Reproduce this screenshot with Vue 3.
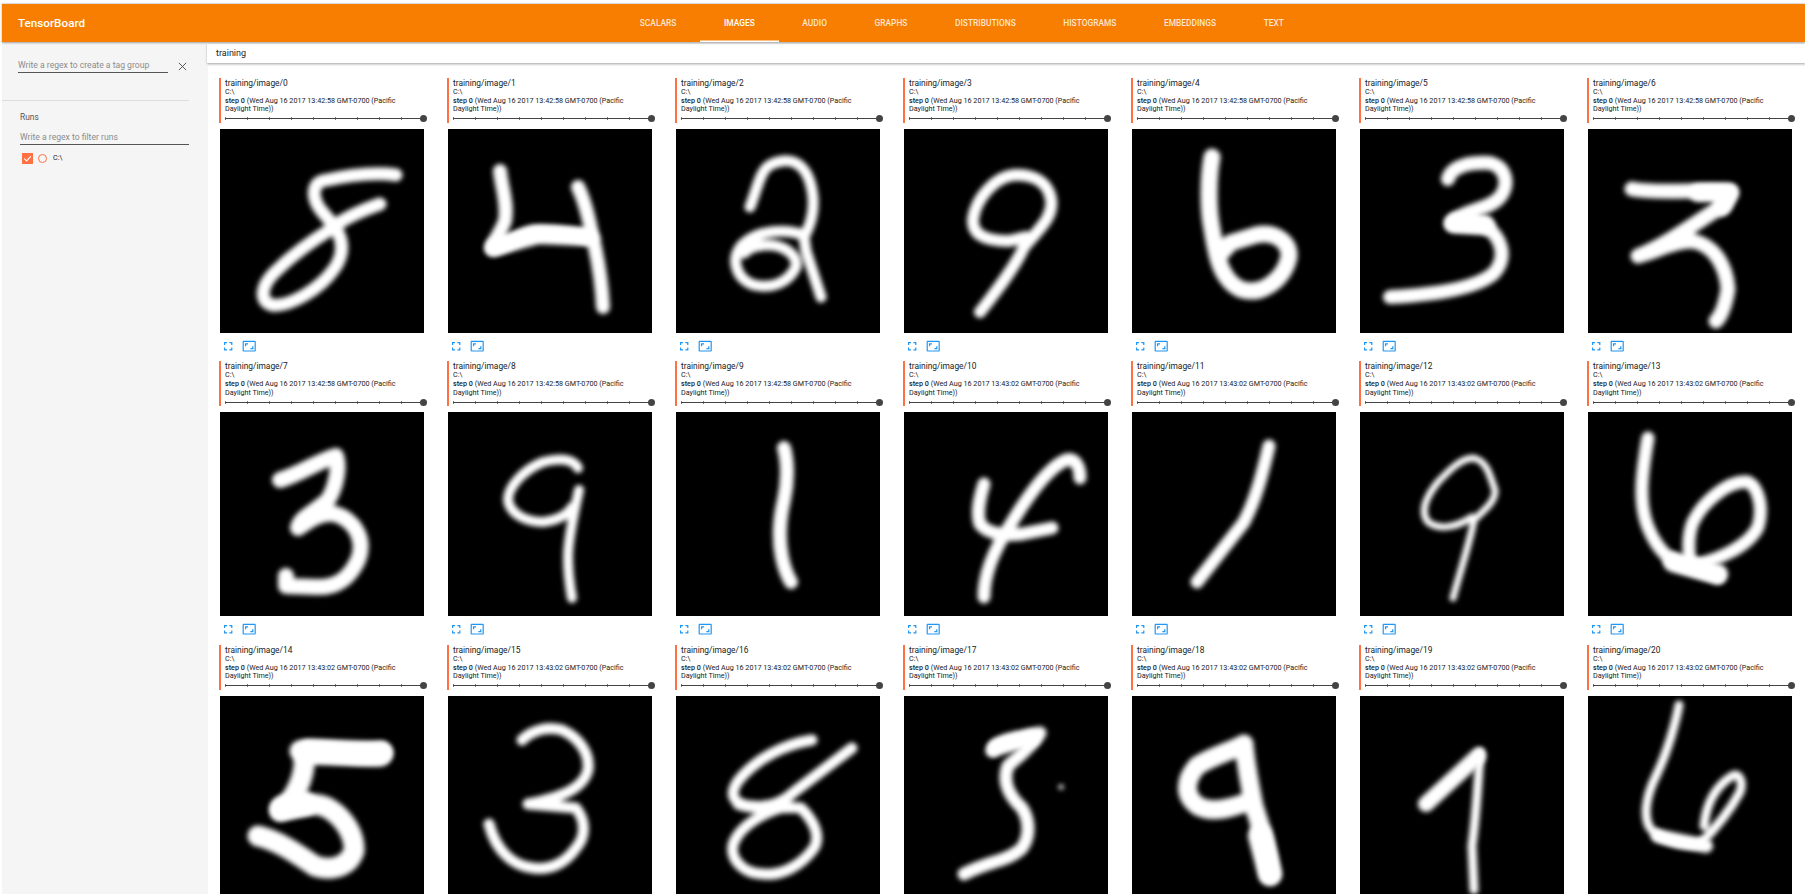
<script setup>
const tabs = ['Scalars', 'Images', 'Audio', 'Graphs', 'Distributions', 'Histograms', 'Embeddings', 'Text'];

// hand traced MNIST samples, coordinates are inside a 204x204 image
const samples = [
  [['M176 46C150 42 120 48 102 52C92 56 92 68 100 80L115 98C124 112 124 126 114 140C100 160 70 178 52 176C38 172 42 156 54 144C70 128 92 112 108 102C122 90 140 82 160 75', 13]],
  [['M52 42C54 60 60 75 57 92C52 105 45 112 44 120C60 118 68 106 85 103C105 102 125 104 146 110M130 58C136 70 140 85 144 105C150 130 154 155 155 178', 14], ['M46 118L90 106L140 108', 18]],
  [['M74 78C82 58 84 40 96 35C112 28 126 32 133 50C140 70 138 90 128 108L130 122L145 168M128 106C110 100 82 100 66 116C54 130 60 150 78 156C96 160 112 154 120 138C122 126 108 116 92 116C82 116 74 118 68 124', 11]],
  [['M76 183C90 165 110 140 120 118C135 100 150 88 147 70C144 52 128 45 110 46C90 48 72 70 69 90C68 104 78 112 105 112L122 108', 12]],
  [['M80 28C76 50 76 80 80 100C84 125 88 150 108 160C130 168 152 150 157 128C158 112 142 102 124 106L98 114C94 120 90 122 88 126', 17]],
  [['M88 50C92 36 112 33 130 34C146 38 150 55 140 68C130 80 110 80 96 90L92 95L124 96C142 108 148 128 134 144C116 160 70 166 30 168', 14], ['M94 94L125 96', 20]],
  [['M44 60C70 65 110 60 142 62L136 76C110 92 80 115 50 127C70 122 85 112 105 112C125 116 138 135 140 160C138 172 135 185 128 192', 15], ['M110 64L142 64L134 78', 18]],
  [['M60 68C80 62 100 48 116 44C120 55 116 75 108 88C95 100 80 105 78 116C90 108 100 100 115 102C135 108 146 128 138 148C130 165 118 176 96 175L66 174L66 164', 16]],
  [['M130 56C125 46 110 46 95 50C75 58 60 75 60 88C62 102 78 110 95 110C110 108 120 102 124 95M131 78C126 100 120 130 120 145C120 160 122 175 124 186', 10]],
  [['M108 36C112 50 112 70 108 88C104 105 102 125 106 145C108 155 112 165 115 170', 14]],
  [['M176 66C176 50 168 44 158 50C140 60 120 90 105 115C92 135 80 160 80 185M80 72C76 85 72 100 76 112C84 122 100 124 118 122L148 116', 13]],
  [['M137 34C132 55 125 85 112 110L65 170', 13]],
  [['M93 186C100 160 110 130 114 108C122 100 136 90 135 78C130 65 128 50 114 46C100 46 88 60 78 70C66 85 60 100 68 110C78 118 96 116 112 105', 7]],
  [['M60 26C54 60 50 90 60 115C68 135 80 150 100 155L130 165M100 155C130 148 160 135 170 115C176 95 170 75 160 70C140 68 115 90 105 110C100 122 100 135 102 150', 13], ['M85 150L130 162', 20]],
  [['M80 55C100 52 140 62 162 56M80 55C88 62 84 85 70 105L60 115C78 110 95 105 108 112C125 122 135 140 134 155C128 172 110 175 95 170C80 160 60 145 38 140', 21], ['M62 112L85 108', 24], ['M88 56L160 58', 25]],
  [['M74 44C84 34 100 30 114 34C132 42 142 58 140 74C136 90 120 100 80 108L128 112C138 125 138 140 128 152C115 170 100 174 85 172C65 170 48 155 41 128', 11]],
  [['M136 44C110 48 80 62 62 85C52 100 58 108 75 110C90 112 105 108 118 96L176 52M62 108C80 115 115 110 125 112C138 125 145 140 138 152C125 170 105 180 88 178C65 178 52 160 58 146C65 130 85 118 104 112', 11]],
  [['M88 55C90 45 110 42 136 37C128 50 115 60 104 70C98 85 105 100 118 112C126 125 126 140 118 152C105 165 85 165 60 178', 13], ['M92 52L128 42', 16], ['M157 91h.1', 5]],
  [['M112 48C100 55 80 60 65 70C52 85 52 100 66 110C80 118 100 112 118 105M112 48C114 70 118 90 122 110C128 130 136 150 138 178', 19], ['M128 140L138 178', 24]],
  [['M66 108L118 60', 16], ['M120 56C118 90 116 120 112 150L114 194', 9]],
  [['M91 9C88 25 80 55 68 80C58 100 55 120 62 132C75 148 100 150 112 148C125 135 140 118 152 96C156 84 150 76 144 80C125 92 118 110 116 130', 9], ['M70 140L118 150', 14]],
];

const cards = samples.map((strokes, i) => ({
  name: `training/image/${i}`,
  time: i < 10 ? '13:42:58' : '13:43:02',
  strokes,
}));
</script>

<template>
  <div class="app">
    <header class="toolbar">
      <div class="brand">TensorBoard</div>
      <nav class="tabs">
        <a
          v-for="tab in tabs"
          :key="tab"
          class="tab"
          :class="{ 'tab--active': tab === 'Images' }"
        >{{ tab }}</a>
      </nav>
    </header>

    <div class="body">
      <aside class="sidebar">
        <div class="tag-filter">
          <div class="field field--tag">Write a regex to create a tag group</div>
          <svg class="clear" viewBox="0 0 10 10">
            <path d="M1 1L9 9M9 1L1 9" />
          </svg>
        </div>
        <div class="runs">
          <div class="runs-title">Runs</div>
          <div class="field field--runs">Write a regex to filter runs</div>
          <div class="run">
            <span class="checkbox">
              <svg viewBox="0 0 12 12"><path d="M2.5 6.2L5 8.6L9.6 3.6" /></svg>
            </span>
            <span class="radio"></span>
            <span class="run-name">C:\</span>
          </div>
        </div>
      </aside>

      <main class="content">
        <div class="category">training</div>
        <section class="panel">
          <article v-for="card in cards" :key="card.name" class="card">
            <div class="card-head">
              <div class="card-title">{{ card.name }}</div>
              <div class="card-line">C:\</div>
              <div class="card-line">
                <b>step 0</b> (Wed Aug 16 2017 {{ card.time }} GMT-0700 (Pacific
              </div>
              <div class="card-line card-line--last">Daylight Time))</div>
              <div class="slider"><span class="thumb"></span></div>
            </div>
            <svg class="digit" viewBox="0 0 204 204">
              <path
                v-for="(stroke, i) in card.strokes"
                :key="i"
                class="digit-stroke"
                :d="stroke[0]"
                :stroke-width="stroke[1]"
              />
            </svg>
            <div class="actions">
              <svg viewBox="0 0 24 24">
                <path d="M7 14H5v5h5v-2H7v-3zm-2-4h2V7h3V5H5v5zm12 7h-3v2h5v-5h-2v3zM14 5v2h3v3h2V5h-5z" />
              </svg>
              <svg viewBox="0 0 24 24">
                <path d="M19 12h-2v3h-3v2h5v-5zM7 9h3V7H5v5h2V9zm14-6H3c-1.1 0-2 .9-2 2v14c0 1.1.9 2 2 2h18c1.1 0 2-.9 2-2V5c0-1.1-.9-2-2-2zm0 16.01H3V4.99h18v14.02z" />
              </svg>
            </div>
          </article>
        </section>
      </main>
    </div>
  </div>
</template>

<style scoped>
.app {
  height: 894px;
  box-sizing: border-box;
  padding: 3px 0 0 2px;
  display: flex;
  flex-direction: column;
  overflow: hidden;
  font-family: Roboto, "Liberation Sans", sans-serif;
  color: #212121;
}

.toolbar {
  height: 38px;
  flex: none;
  border-top: 1px solid #ddd;
  display: flex;
  background: #f77e00;
  box-shadow: 0 1px 2px rgba(0, 0, 0, 0.35);
  position: relative;
  z-index: 2;
}

.brand {
  width: 598px;
  padding-left: 16px;
  font-size: 11.7px;
  font-weight: 500;
  line-height: 38px;
  color: #fff;
}

.tabs {
  display: flex;
}

.tab {
  padding: 0 23.8px;
  font-size: 8.4px;
  font-weight: 500;
  line-height: 38px;
  text-transform: uppercase;
  color: rgba(255, 255, 255, 0.82);
}

.tab--active {
  color: #fff;
  box-shadow: inset 0 -1.5px 0 #fff;
}

.body {
  flex: 1;
  min-height: 0;
  display: flex;
  background: #f5f5f5;
}

.sidebar {
  width: 205px;
  flex: none;
}

.tag-filter {
  display: flex;
  align-items: flex-start;
  gap: 10px;
  padding: 18px 0 0 16px;
  height: 59px;
  box-sizing: border-box;
  width: 187px;
  border-bottom: 1px solid #ddd;
}

.field {
  font-size: 8.6px;
  color: #8c8c8c;
  border-bottom: 1px solid #555;
  box-sizing: border-box;
  height: 13px;
  line-height: 11px;
}

.field--tag {
  width: 150px;
}

.clear {
  width: 9px;
  height: 9px;
  margin-top: 2px;
}

.clear path {
  fill: none;
  stroke: #555;
  stroke-width: 1.1;
}

.runs {
  padding: 11px 16px 0 18px;
  width: 187px;
  box-sizing: border-box;
}

.runs-title {
  font-size: 8.4px;
  line-height: 10px;
  color: #555;
  margin-bottom: 10px;
}

.field--runs {
  width: 169px;
  margin-top: 4px;
}

.run {
  display: flex;
  align-items: center;
  padding: 8px 0 0 2px;
}

.checkbox {
  width: 11px;
  height: 11px;
  background: #ff7043;
}

.checkbox svg {
  display: block;
}

.checkbox path {
  fill: none;
  stroke: #fff;
  stroke-width: 1.3;
}

.radio {
  width: 9px;
  height: 9px;
  margin: 0 6px 0 5px;
  box-sizing: border-box;
  border: 1px solid #ff7043;
  border-radius: 50%;
}

.run-name {
  font-size: 7.2px;
  line-height: 9px;
  margin-top: -3px;
}

.content {
  flex: 1;
  min-width: 0;
  display: flex;
  flex-direction: column;
}

.category {
  height: 19px;
  flex: none;
  margin-top: 2px;
  padding-left: 9px;
  font-size: 9px;
  line-height: 18px;
  background: #fff;
  box-shadow: 0 1px 2px rgba(0, 0, 0, 0.3);
}

.panel {
  flex: 1;
  margin: 3px 0 0 1px;
  padding: 12px 0 0 12px;
  background: #fff;
  display: grid;
  grid-template-columns: repeat(7, 204px);
  column-gap: 24px;
  row-gap: 8.6px;
  align-content: start;
}

.card {
  width: 204px;
}

.card-head {
  height: 45px;
  width: 205px;
  margin: 0 0 6px -1px;
  box-sizing: border-box;
  border-left: 2px solid #ff7043;
  padding-left: 4px;
}

.card-title {
  font-size: 8.4px;
  line-height: 10px;
}

.card-line {
  font-size: 7.2px;
  line-height: 8.6px;
  white-space: nowrap;
}

.card-line--last {
  margin-bottom: 3.5px;
}

.card-line b {
  font-weight: 500;
}

.slider {
  position: relative;
  width: 198px;
  height: 3px;
  background:
    linear-gradient(#444, #444) 0 1px / 100% 1px no-repeat,
    repeating-linear-gradient(90deg, #777 0 1px, transparent 1px 22px);
}

.thumb {
  position: absolute;
  right: -3.5px;
  top: -2px;
  width: 7px;
  height: 7px;
  border-radius: 50%;
  background: #444;
}

.digit {
  display: block;
  width: 204px;
  height: 204px;
  background: #000;
}

.digit-stroke {
  fill: none;
  stroke: #fff;
  stroke-linecap: round;
  stroke-linejoin: round;
  filter: blur(2.4px);
}

.actions {
  display: flex;
  gap: 7px;
  margin: 5.5px 0 0 1px;
}

.actions svg {
  display: block;
  width: 14.4px;
  height: 14.4px;
  fill: #2196f3;
}
</style>

<style>
html,
body {
  margin: 0;
  overflow: hidden;
  background: #fff;
}
</style>
